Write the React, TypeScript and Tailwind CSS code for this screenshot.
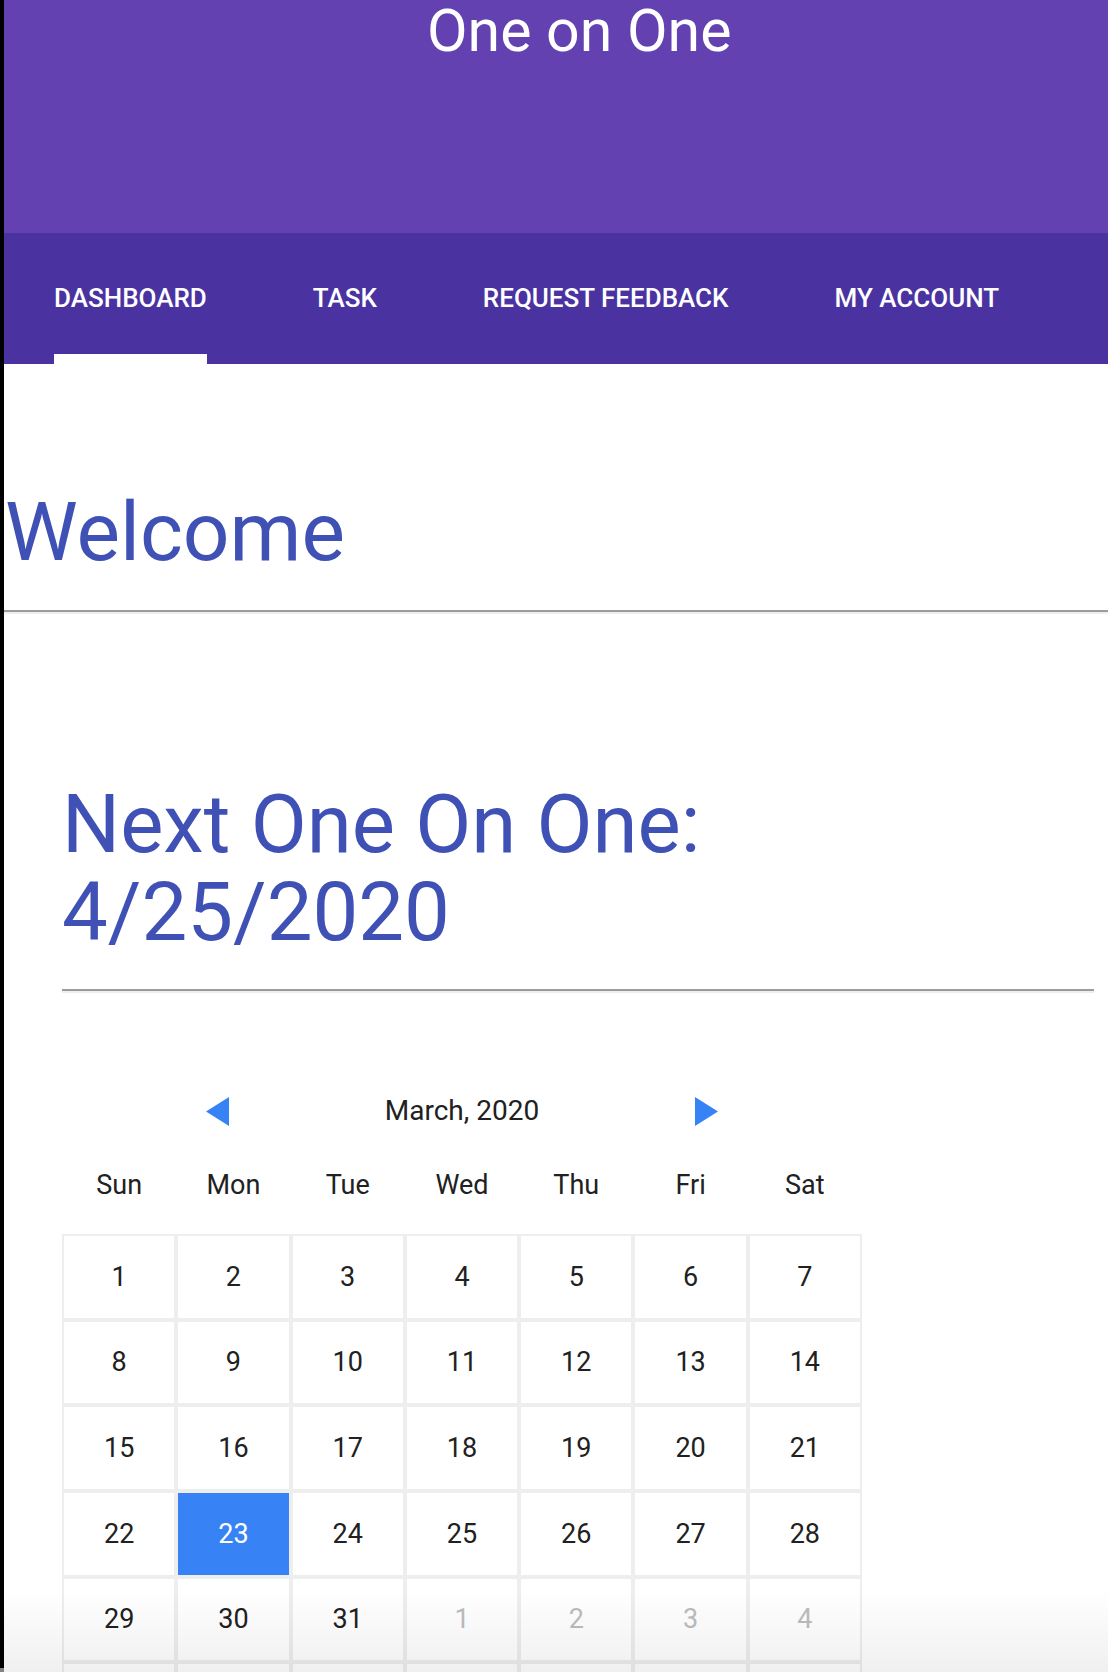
import React from 'react';

const tabs = ['DASHBOARD', 'TASK', 'REQUEST FEEDBACK', 'MY ACCOUNT'];
const weekDays = ['Sun', 'Mon', 'Tue', 'Wed', 'Thu', 'Fri', 'Sat'];

type Day = { n: number; muted?: boolean; selected?: boolean };

const buildDays = (): Day[] => {
  const days: Day[] = [];
  for (let i = 1; i <= 31; i++) days.push({ n: i, selected: i === 23 });
  for (let i = 1; i <= 11; i++) days.push({ n: i, muted: true });
  return days;
};

const Arrow: React.FC<{ dir: 'left' | 'right' }> = ({ dir }) => (
  <svg width="23" height="29" viewBox="0 0 23 29">
    <polygon
      points={dir === 'left' ? '23,0 0,14.5 23,29' : '0,0 23,14.5 0,29'}
      fill="#3783f5"
    />
  </svg>
);

const Divider: React.FC<{ className?: string }> = ({ className = '' }) => (
  <div className={`h-0 border-t-2 border-b-2 border-t-[#9c9c9c] border-b-[#eeeeee] ${className}`} />
);

const App: React.FC = () => {
  const days = buildDays();

  return (
    <div className="flex min-h-[1672px] bg-white font-['Roboto','Liberation_Sans',sans-serif]">
      {/* desktop peeking on the left edge */}
      <div className="flex w-[4px] shrink-0 flex-col bg-black">
        <div className="flex-1" />
        <div className="h-[68px] bg-[#8c8c8c]" />
        <div className="h-[12px] bg-[#4a33a0]" />
      </div>

      <div className="relative flex-1 overflow-hidden">
        <header className="h-[233px] bg-[#6341b0] pl-[423px]">
          <h1 className="pt-[1px] text-[59px] leading-none text-white">One on One</h1>
        </header>

        <nav className="flex h-[131px] gap-[106px] bg-[#4a33a0] pl-[50px]">
          {tabs.map((tab, i) => (
            <div key={tab} className="flex flex-col">
              <span className="pt-[50px] text-[26px] font-medium leading-[30px] text-white">
                {tab}
              </span>
              <div className={`mt-auto h-[10px] ${i === 0 ? 'bg-white' : ''}`} />
            </div>
          ))}
        </nav>

        <h2 className="mt-[127px] pl-[1px] text-[82px] leading-none text-[#4051b5]">Welcome</h2>
        <Divider className="mt-[37px]" />

        <section className="pl-[58px] pr-[14px]">
          <h2 className="mt-[166px] text-[81.5px] leading-[88px] text-[#4051b5]">
            Next One On One:
            <br />
            4/25/2020
          </h2>
          <Divider className="mt-[33px]" />

          <div className="w-[800px] text-[#212121]">
            <div className="mt-[103px] flex h-[30px] items-center justify-between px-[144px]">
              <Arrow dir="left" />
              <span className="text-[28px] leading-[30px]">March, 2020</span>
              <Arrow dir="right" />
            </div>

            <div className="mt-[44px] grid grid-cols-7">
              {weekDays.map((d) => (
                <span key={d} className="text-center text-[27px] leading-[30px]">
                  {d}
                </span>
              ))}
            </div>

            <div className="mt-[34px] grid grid-cols-7">
              {days.map((d, i) => (
                <div
                  key={i}
                  className={`flex h-[85.7px] items-center justify-center border-2 border-[#eeeeee] text-[27px] ${
                    d.selected
                      ? 'bg-[#3783f5] text-white'
                      : d.muted
                      ? 'bg-white text-[#bdbdbd]'
                      : 'bg-white text-[#212121]'
                  }`}
                >
                  {d.n}
                </div>
              ))}
            </div>
          </div>
        </section>
      </div>

      {/* soft shadow fading in at the bottom of the capture */}
      <div className="pointer-events-none fixed inset-x-0 top-[1590px] h-[82px] bg-gradient-to-b from-transparent to-black/[0.06]" />
    </div>
  );
};

export default App;
